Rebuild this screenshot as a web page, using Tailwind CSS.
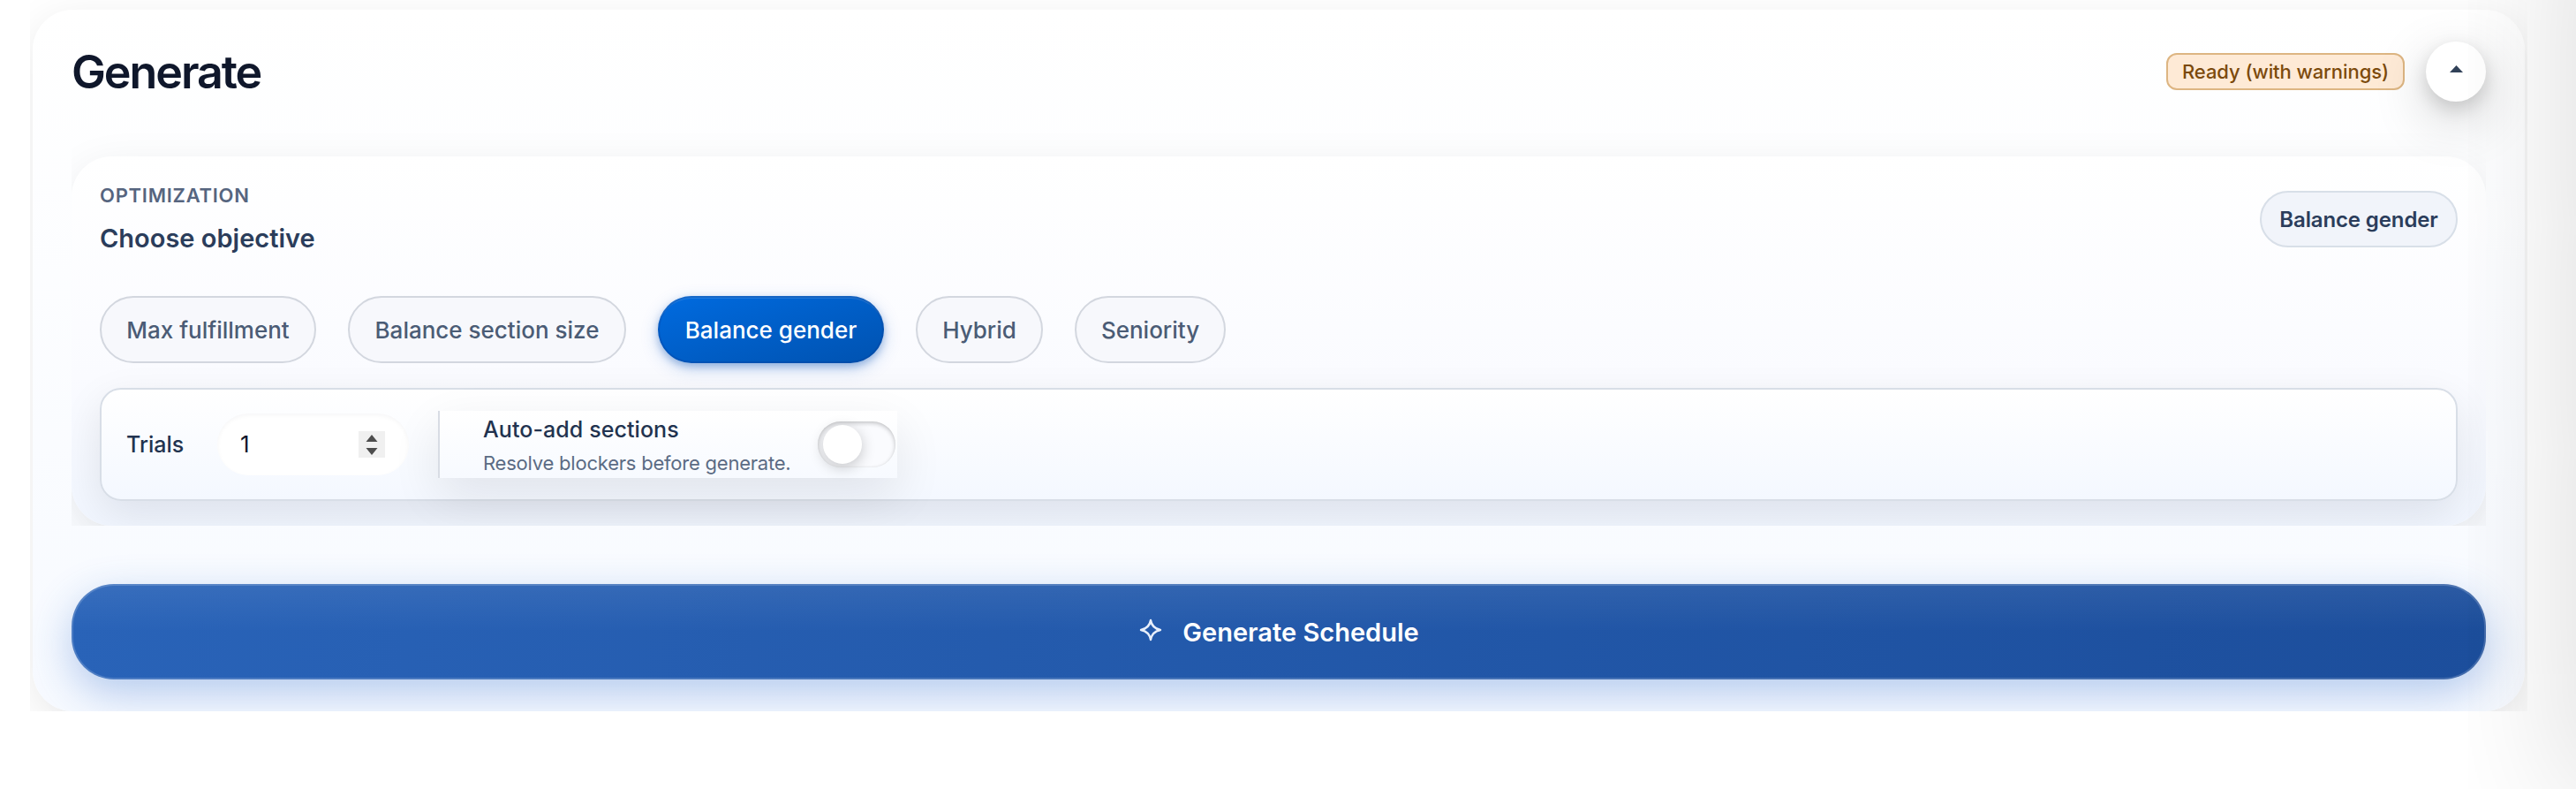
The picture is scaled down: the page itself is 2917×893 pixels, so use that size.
<!DOCTYPE html>
<html lang="en">
<head>
  <meta charset="UTF-8" />
  <meta name="viewport" content="width=device-width, initial-scale=1.0"/>
  <title>Generate Schedule</title>
  <script src="https://cdn.jsdelivr.net/npm/@tailwindcss/browser@4"></script>
</head>
<body class="relative h-[893px] overflow-hidden bg-white font-['Inter',sans-serif] text-slate-900">

<div class="mx-[34px] w-[2828px] h-[805px] overflow-hidden px-[3px] pt-[11px]">
  <!-- Generate card -->
  <section class="h-[794px] rounded-[46px] bg-linear-to-b from-white to-[#f7faff] px-11 pt-9 shadow-[0_12px_48px_rgba(0,0,0,0.09)]">

    <!-- Header -->
    <header class="flex h-[68px] items-center justify-between">
      <h1 class="pt-0.5 text-[52px] leading-none font-semibold tracking-[-0.04em] text-slate-900">Generate</h1>
      <div class="flex items-center gap-6">
        <span class="flex h-[42px] w-[270px] items-center justify-center rounded-xl border-2 border-[#ddb582] bg-[#feead6] text-[22px] leading-none font-medium tracking-[-0.003em] text-[#7c4a0c]">Ready (with warnings)</span>
        <button type="button" aria-label="Collapse" class="flex size-[68px] items-center justify-center rounded-full bg-white shadow-[0_20px_64px_rgba(0,0,0,0.2),0_8px_20px_rgba(0,0,0,0.15)]">
          <svg class="mb-1.5 h-2 w-[15px] fill-slate-700" viewBox="0 0 15 8"><path d="M7.5 0 15 8H0z"/></svg>
        </button>
      </div>
    </header>

    <!-- Optimization panel -->
    <div class="-mt-1 h-[484px] overflow-hidden pt-[66px]">
      <div class="h-[418px] rounded-[46px] bg-linear-to-b from-white via-[#fafbff] via-60% to-[#f1f6ff] px-8 pt-8 shadow-[0_12px_48px_rgba(0,0,0,0.08)]">
        <div class="flex items-start justify-between">
          <div>
            <p class="text-[22px] leading-6 font-semibold tracking-[0.034em] text-[#56657f]">OPTIMIZATION</p>
            <h2 class="mt-[19px] text-[29px] leading-9 font-semibold text-[#2b3d5b]">Choose objective</h2>
          </div>
          <span class="mt-[7px] flex h-16 w-56 items-center justify-center rounded-full border-2 border-[#d8dfe8] bg-[#f1f4fa] pt-px text-[24px] leading-none font-semibold tracking-[-0.005em] text-[#2b3d5b]">Balance gender</span>
        </div>

        <!-- Objectives -->
        <div class="mt-[47px] flex gap-9 text-[26px] leading-none font-medium text-[#4b5c75]">
          <button type="button" class="flex h-[76px] w-[245px] items-center justify-center rounded-full border-2 border-[#d3d7df] bg-[#f7f8fc] pt-px">Max fulfillment</button>
          <button type="button" class="flex h-[76px] w-[315px] items-center justify-center rounded-full border-2 border-[#d3d7df] bg-[#f7f8fc] pt-px">Balance section size</button>
          <button type="button" class="flex h-[76px] w-[256px] items-center justify-center rounded-full bg-linear-to-br from-[#006be0] to-[#0052b0] pt-px text-white shadow-[0_4px_8px_rgba(0,70,170,0.3),0_6px_20px_rgba(0,90,200,0.22),inset_0_0_0_2px_rgba(0,60,150,0.3),inset_0_3px_0_rgba(255,255,255,0.12)]">Balance gender</button>
          <button type="button" class="flex h-[76px] w-36 items-center justify-center rounded-full border-2 border-[#d3d7df] bg-[#f7f8fc] pt-px">Hybrid</button>
          <button type="button" class="flex h-[76px] w-[171px] items-center justify-center rounded-full border-2 border-[#d3d7df] bg-[#f7f8fc] pt-px">Seniority</button>
        </div>

        <!-- Run settings -->
        <div class="mt-7 flex h-32 items-center rounded-3xl border-2 border-[#d8dee7] bg-linear-to-b from-white to-[#f4f8ff] pl-7 shadow-[0_16px_48px_rgba(0,10,20,0.09)]">
          <label class="w-[103px] text-[25px] leading-none font-medium text-[#22334f]">Trials</label>
          <div class="flex h-[70px] w-[217px] items-center justify-between rounded-full bg-white pr-[27px] pl-[26px] text-[26px] leading-none text-slate-900 shadow-[inset_0_2px_5px_rgba(15,23,42,0.04)]">
            <span>1</span>
            <svg class="h-[30px] w-[30px]" viewBox="0 0 30 30"><path fill="#f0f0f0" d="M0 0h30v30H0z"/><path fill="#4d4d4d" d="M15 4l6.500 8h-13zM15 27l6.500-8h-13z"/></svg>
          </div>
          <div class="ml-[33px] flex h-[76px] w-[520px] items-center border-l-2 border-[#d8dce4] bg-linear-to-b from-white to-[#f7faff] pl-[49px] shadow-[0_20px_56px_rgba(0,10,20,0.09)]">
            <div class="w-[379px]">
              <p class="pt-1 text-[25px] leading-8 font-medium tracking-[0.003em] text-[#22334f]">Auto-add sections</p>
              <p class="mt-1.5 text-[22px] leading-8 tracking-[-0.01em] text-[#5b6b84]">Resolve blockers before generate.</p>
            </div>
            <button type="button" role="switch" aria-checked="false" aria-label="Auto-add sections" class="flex h-[52px] w-[88px] rounded-full bg-[#fafbfe] px-1.5 py-1 shadow-[inset_0_2px_5px_rgba(0,0,0,0.22),inset_0_0_2px_rgba(0,0,0,0.06)]">
              <span class="size-11 rounded-full bg-white shadow-[0_4px_16px_rgba(0,0,0,0.22)]"></span>
            </button>
          </div>
        </div>
      </div>
    </div>

    <!-- Submit -->
    <button type="button" class="mt-[66px] flex h-[108px] w-full items-center justify-center rounded-[48px] bg-[linear-gradient(to_bottom,rgba(255,255,255,0.07),transparent_50%),linear-gradient(100deg,#2963b8,#1c4e9c)] text-[29px] leading-none font-semibold text-white shadow-[inset_0_0_0_2px_rgba(255,255,255,0.17),0_16px_48px_rgba(37,99,200,0.32)]">
      <svg class="mr-[23px] ml-px mb-1 size-[26px]" viewBox="0 0 26 26" fill="none" stroke="#e8effb" stroke-width="2.400" stroke-linejoin="round"><path d="M13 2q1.500 9 11 11-9.500 2-11 11-1.500-9-11-11 9.500-2 11-11z"/></svg>
      <span>Generate Schedule</span>
    </button>
  </section>
</div>

<!-- Shadow cast by the drawer docked past the right edge -->
<div class="pointer-events-none absolute inset-0 overflow-hidden">
  <div class="absolute -top-52 left-full h-[1110px] w-40 shadow-[0_0_160px_rgba(0,0,0,0.16)]"></div>
</div>

</body>
</html>
